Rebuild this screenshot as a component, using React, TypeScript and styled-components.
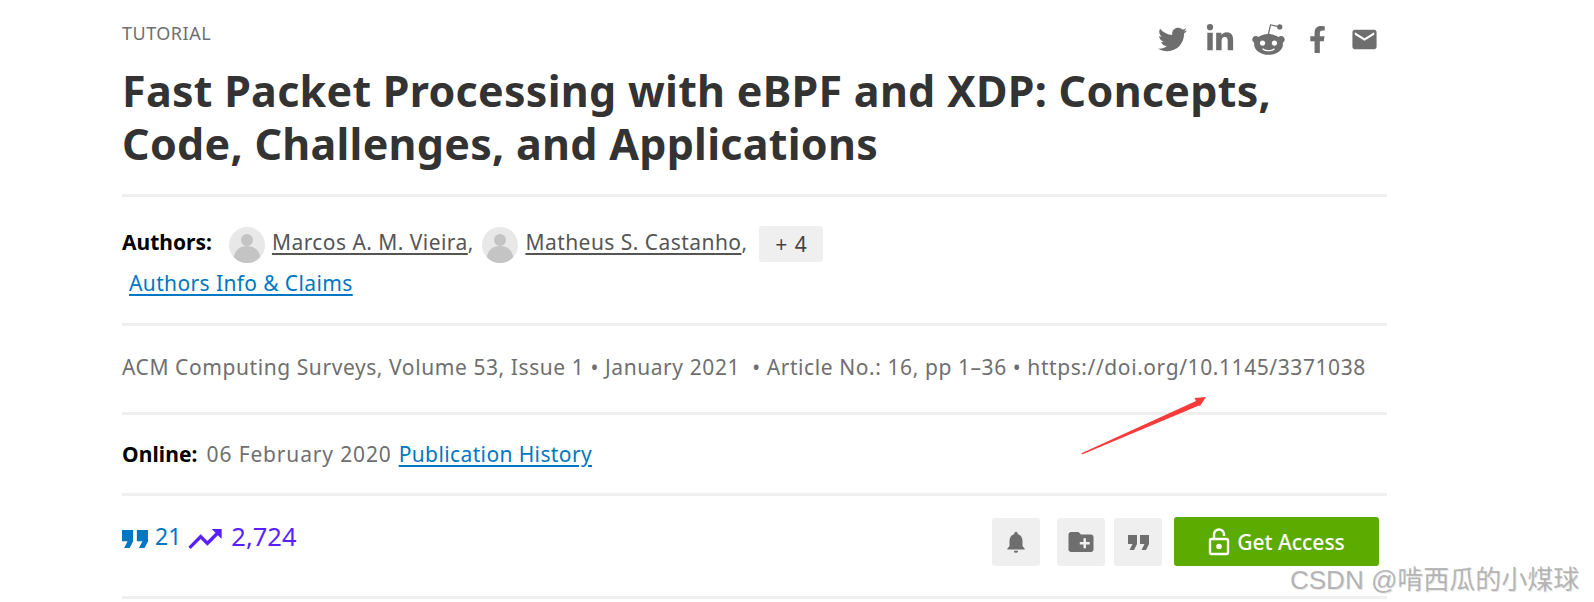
import React from "react";
import styled, { createGlobalStyle } from "styled-components";
import { FaTwitter, FaLinkedinIn, FaRedditAlien, FaFacebookF } from "react-icons/fa";
import { MdEmail, MdTrendingUp, MdNotifications, MdCreateNewFolder } from "react-icons/md";

const Global = createGlobalStyle`
  html, body { margin: 0; padding: 0; background: #fff; }
  body { width: 1594px; height: 602px; overflow: hidden; position: relative; font-family: "Noto Sans", "Open Sans", sans-serif; }
`;

const Page = styled.main`
  width: 1265px;
  margin-left: 122px;
`;

const TopRow = styled.div`
  display: flex;
  justify-content: space-between;
  align-items: flex-start;
  height: 64px;
  padding: 22px 11px 0 0;
  box-sizing: border-box;
`;

const Kicker = styled.span`
  font-size: 18px;
  line-height: 22px;
  color: #6f6f6f;
  letter-spacing: 0.5px;
`;

const Social = styled.div`
  display: flex;
  align-items: center;
  height: 32px;
  margin-top: 1px;
  color: #6e6e6e;
  svg { flex: none; }
`;

const SocialSlot = styled.span<{ $w: number; $ml: number }>`
  display: flex;
  justify-content: center;
  width: ${(p) => p.$w}px;
  margin-left: ${(p) => p.$ml}px;
`;

const Title = styled.h1`
  margin: 0;
  font-size: 43px;
  line-height: 53px;
  font-weight: 700;
  color: #333;
  letter-spacing: 0.27px;
  padding-bottom: 24px;
`;

const Rule = styled.hr`
  border: 0;
  height: 3px;
  background: #efefef;
  margin: 0;
`;

const Authors = styled.section`
  padding-top: 30px;
  height: 126px;
  box-sizing: border-box;
`;

const AuthorLine = styled.div`
  display: flex;
  align-items: center;
  height: 36px;
  font-size: 21px;
  color: #555;
`;

const Label = styled.b`
  color: #000;
  font-size: 21px;
  font-weight: 700;
`;

const RaisedLabel = styled(Label)`
  padding-bottom: 6px;
  margin-right: 17px;
`;

const OnlineLabel = styled(Label)`
  letter-spacing: 0.1px;
  margin-right: 9px;
`;

const DateText = styled.span`
  letter-spacing: 0.85px;
  margin-right: 7px;
`;

const Avatar = styled.svg`
  width: 36px;
  height: 36px;
  border-radius: 50%;
  margin-right: 7px;
  flex: none;
`;

const AuthorLink = styled.a`
  color: #555;
  text-decoration: underline;
  text-underline-offset: 3px;
  letter-spacing: 0.45px;
  padding-bottom: 6px;
`;

const Comma = styled.span`
  margin-right: 9px;
  padding-bottom: 6px;
`;

const More = styled.span`
  display: flex;
  align-items: center;
  justify-content: center;
  width: 64px;
  height: 36px;
  margin: 0 0 2px 3px;
  background: #efefef;
  border-radius: 3px;
  font-size: 21px;
  color: #444;
  word-spacing: 2px;
`;

const Link = styled.a<{ $indent?: number }>`
  color: #0077c2;
  text-decoration: underline;
  text-underline-offset: 3px;
  font-size: 21px;
  letter-spacing: 0.38px;
  margin-left: ${(p) => p.$indent ?? 0}px;
`;

const InfoLine = styled.div`
  display: block;
  margin-top: 6px;
  line-height: 28px;
`;

const Meta = styled.section<{ $h: number; $pb: number }>`
  display: flex;
  align-items: center;
  box-sizing: border-box;
  height: ${(p) => p.$h}px;
  padding-bottom: ${(p) => p.$pb}px;
  font-size: 21px;
  color: #6f6f6f;
  letter-spacing: 0.58px;
  white-space: pre;
`;

const Bottom = styled.section`
  display: flex;
  justify-content: space-between;
  height: 100px;
  box-sizing: border-box;
  padding-top: 21px;
`;

const Metrics = styled.div`
  display: flex;
  align-items: flex-start;
  line-height: 40px;
  height: 40px;
  margin-top: -1px;
`;

const Metric = styled.span<{ $c: string; $size: number; $gap: number; $mr: number }>`
  display: flex;
  align-items: center;
  gap: ${(p) => p.$gap}px;
  color: ${(p) => p.$c};
  font-size: ${(p) => p.$size}px;
  margin-right: ${(p) => p.$mr}px;
  svg { flex: none; }
`;

const TrendIcon = styled(MdTrendingUp)`
  transform: translateY(3px);
`;

const QuoteGlyph = styled.svg<{ $w: number }>`
  width: ${(p) => p.$w}px;
  height: ${(p) => (p.$w * 10) / 14}px;
  fill: currentColor;
  flex: none;
`;

const LoweredQuote = styled(QuoteGlyph)`
  margin-top: 6px;
`;

const Actions = styled.div`
  display: flex;
  align-items: flex-start;
  padding-right: 8px;
`;

const IconButton = styled.span<{ $mr: number }>`
  display: flex;
  align-items: center;
  justify-content: center;
  width: 48px;
  height: 48px;
  margin: 1px ${(p) => p.$mr}px 0 0;
  border-radius: 3px;
  background: #efefef;
  color: #6e6e6e;
  svg { flex: none; }
`;

const Access = styled.span`
  display: flex;
  align-items: center;
  justify-content: center;
  gap: 7px;
  width: 205px;
  height: 49px;
  border-radius: 3px;
  background: #5bab00;
  color: #fff;
  font-size: 21px;
  font-weight: 500;
`;

const Arrow = styled.svg`
  position: absolute;
  left: 1060px;
  top: 380px;
`;

const Watermark = styled.span`
  position: absolute;
  left: 1290px;
  top: 564px;
  font-family: "Liberation Sans", "Noto Sans CJK SC", sans-serif;
  font-size: 26px;
  line-height: 32px;
  color: rgba(165, 165, 165, 0.8);
  text-shadow: 1px 1px 0 rgba(120,120,120,.2);
  white-space: nowrap;
`;

const Person = () => (
  <Avatar viewBox="0 0 36 36">
    <rect width="36" height="36" fill="#e8e8e8" />
    <circle cx="18" cy="13" r="6" fill="#c4c4c4" />
    <ellipse cx="18" cy="30" rx="13" ry="11" fill="#c4c4c4" />
  </Avatar>
);

const quotePath = "M6 17h3l2-4V7H5v6h3zm8 0h3l2-4V7h-6v6h3z";

export default function App() {
  return (
    <>
      <Global />
      <Page>
        <TopRow>
          <Kicker>TUTORIAL</Kicker>
          <Social>
            <SocialSlot $w={29} $ml={0}><FaTwitter size={29} /></SocialSlot>
            <SocialSlot $w={27} $ml={19}><FaLinkedinIn size={30} /></SocialSlot>
            <SocialSlot $w={34} $ml={18}><FaRedditAlien size={35} /></SocialSlot>
            <SocialSlot $w={16} $ml={24}><FaFacebookF size={27} /></SocialSlot>
            <SocialSlot $w={24} $ml={27}><MdEmail size={29} /></SocialSlot>
          </Social>
        </TopRow>
        <Title>
          Fast Packet Processing with eBPF and XDP: Concepts,
          <br />
          Code, Challenges, and Applications
        </Title>
        <Rule />
        <Authors>
          <AuthorLine>
            <RaisedLabel>Authors:</RaisedLabel>
            <Person />
            <AuthorLink>Marcos A. M. Vieira</AuthorLink>
            <Comma>,</Comma>
            <Person />
            <AuthorLink>Matheus S. Castanho</AuthorLink>
            <Comma>,</Comma>
            <More>+ 4</More>
          </AuthorLine>
          <InfoLine>
            <Link $indent={7}>Authors Info &amp; Claims</Link>
          </InfoLine>
        </Authors>
        <Rule />
        <Meta $h={86} $pb={4}>ACM Computing Surveys, Volume 53, Issue 1 • January 2021  • Article No.: 16, pp 1–36 • https://doi.org/10.1145/3371038</Meta>
        <Rule />
        <Meta $h={78} $pb={0}>
          <OnlineLabel>Online:</OnlineLabel>
          <DateText>06 February 2020</DateText>
          <Link>Publication History</Link>
        </Meta>
        <Rule />
        <Bottom>
          <Metrics>
            <Metric $c="#0077c2" $size={23} $gap={7} $mr={4}>
              <LoweredQuote $w={26} viewBox="5 7 14 10"><path d={quotePath} /></LoweredQuote>
              21
            </Metric>
            <Metric $c="#5a1fff" $size={25.5} $gap={6} $mr={0}>
              <TrendIcon size={40} />
              2,724
            </Metric>
          </Metrics>
          <Actions>
            <IconButton $mr={17}><MdNotifications size={26} /></IconButton>
            <IconButton $mr={9}><MdCreateNewFolder size={30} /></IconButton>
            <IconButton $mr={12}>
              <QuoteGlyph $w={21} viewBox="5 7 14 10"><path d={quotePath} /></QuoteGlyph>
            </IconButton>
            <Access>
              <svg width="22" height="28" viewBox="0 0 22 28" fill="none" stroke="#fff" strokeWidth="2.4">
                <rect x="2" y="11" width="18" height="15" rx="1.5" />
                <path d="M6 11V6.5a5 5 0 0 1 10 0V8" />
                <circle cx="11" cy="18.5" r="1.6" fill="#fff" />
              </svg>
              Get Access
            </Access>
          </Actions>
        </Bottom>
        <Rule />
      </Page>
      <Arrow width="160" height="90" viewBox="0 0 160 90">
        <path d="M21.5 73.2 L136 21 L134.5 18 L146 17 L140 26 L139 25.5 L22 74.6 Z" fill="#f93a3a" />
      </Arrow>
      <Watermark>CSDN @啃西瓜的小煤球</Watermark>
    </>
  );
}
